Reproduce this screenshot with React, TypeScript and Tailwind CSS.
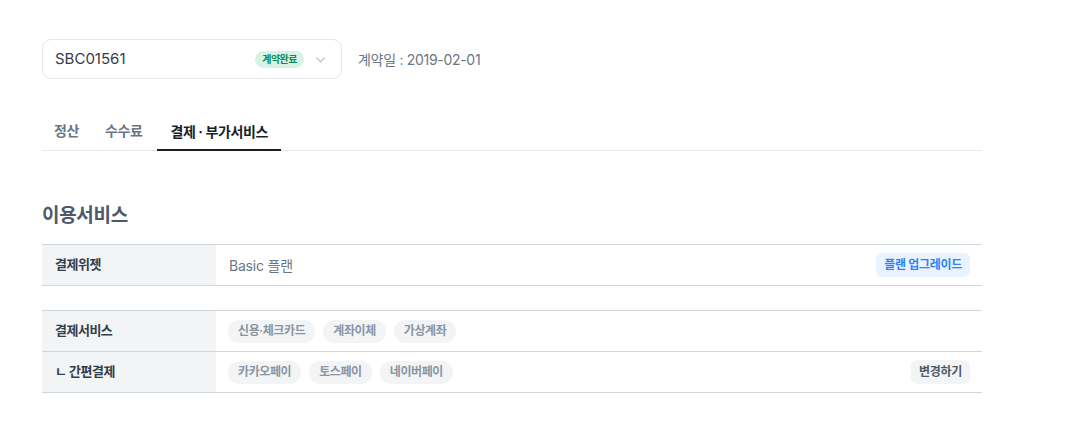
import React from "react";

const font = { fontFamily: 'Inter, "Noto Sans CJK KR", sans-serif' };

function Pill({ children }: { children: React.ReactNode }) {
  return (
    <span className="inline-flex h-[23px] items-center rounded-full bg-[#f2f4f6] px-[10px] text-[12px] font-semibold leading-none text-[#8b95a1] tracking-[-0.4px]">
      {children}
    </span>
  );
}

function Row({
  label,
  children,
  right,
  last,
}: {
  label: React.ReactNode;
  children: React.ReactNode;
  right?: React.ReactNode;
  last?: boolean;
}) {
  return (
    <div className={`flex h-[40px] box-content ${last ? "" : "border-b border-[#d1d6db]"}`}>
      <div className="flex w-[174px] shrink-0 items-center bg-[#f2f4f6] pl-[13px] text-[13px] font-bold tracking-[-0.5px] text-[#333d4b]">
        {label}
      </div>
      <div className="flex flex-1 items-center justify-between pl-[12px] pr-[12px]">
        <div className="flex items-center gap-[8px]">{children}</div>
        {right}
      </div>
    </div>
  );
}

export default function App() {
  return (
    <div className="min-h-[429px] w-full bg-white pl-[42px] pt-[39px]" style={font}>
      <div className="w-[940px]">
        <div className="flex items-center gap-[16px]">
          <div className="flex h-[40px] w-[300px] items-center justify-between rounded-[9px] border border-[#e5e8eb] pl-[12px] pr-[14px]">
            <span className="text-[15px] text-[#333d4b]">SBC01561</span>
            <div className="flex items-center gap-[10px]">
              <span className="inline-flex h-[17px] items-center rounded-full bg-[#d6f3e6] px-[7px] text-[10px] font-bold leading-none tracking-[-0.5px] text-[#0d8a5c]">
                계약완료
              </span>
              <svg width="13" height="13" viewBox="0 0 24 24" fill="none" stroke="#b0b8c1" strokeWidth="2" strokeLinecap="round" strokeLinejoin="round">
                <path d="M5 9l7 7 7-7" />
              </svg>
            </div>
          </div>
          <span className="text-[14px] tracking-[-0.3px] text-[#6b7684]">계약일 : 2019-02-01</span>
        </div>

        <div className="mt-[32px] flex h-[40px] border-b border-[#e5e8eb]">
          <div className="-ml-px flex items-center px-[13px] text-[14px] font-semibold tracking-[-0.4px] text-[#6b7684]">정산</div>
          <div className="flex items-center pl-[13px] pr-[15px] text-[14px] font-semibold tracking-[-0.4px] text-[#6b7684]">수수료</div>
          <div className="-mb-px flex items-center border-b-2 border-[#191f28] px-[13px] pt-[2px] text-[14px] font-bold tracking-[-0.4px] text-[#191f28]">
            결제 · 부가서비스
          </div>
        </div>

        <h2 className="mt-[52px] text-[19px] font-bold tracking-[-0.3px] text-[#4e5968] leading-[26px]">이용서비스</h2>

        <div className="mt-[15px] border-y border-[#d1d6db]">
          <Row
            label="결제위젯"
            last
            right={
              <span className="inline-flex h-[24px] items-center rounded-[6px] bg-[#e8f3ff] px-[8px] text-[12px] font-bold tracking-[-0.3px] text-[#3182f6]">
                플랜 업그레이드
              </span>
            }
          >
            <span className="pl-[1px] text-[14px] tracking-[-0.2px] text-[#6b7684]">Basic 플랜</span>
          </Row>
        </div>

        <div className="mt-[24px] border-y border-[#d1d6db]">
          <Row label="결제서비스">
            <Pill>신용·체크카드</Pill>
            <Pill>계좌이체</Pill>
            <Pill>가상계좌</Pill>
          </Row>
          <Row
            label={<span>ㄴ 간편결제</span>}
            last
            right={
              <span className="inline-flex h-[24px] items-center rounded-[6px] bg-[#f2f4f6] px-[8px] text-[12px] font-bold tracking-[-0.3px] text-[#4e5968]">
                변경하기
              </span>
            }
          >
            <Pill>카카오페이</Pill>
            <Pill>토스페이</Pill>
            <Pill>네이버페이</Pill>
          </Row>
        </div>
      </div>
    </div>
  );
}
